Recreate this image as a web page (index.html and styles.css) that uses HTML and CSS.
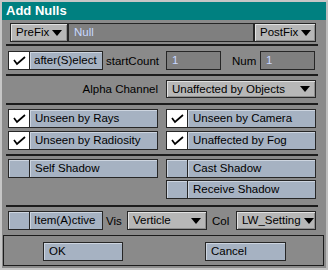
FILE: index.html
```html
<!DOCTYPE html>
<html>
<head>
<meta charset=utf-8>
<title>Add Nulls</title>
<link rel="stylesheet" href="styles.css">
</head>
<body>
<div class="window">
  <div class="titlebar">Add Nulls</div>
  <div class="content">
    <div class="row row-name">
      <div class="btn drop prefix">PreFix<span class="tri"></span></div>
      <div class="field name">Null</div>
      <div class="btn drop postfix">PostFix<span class="tri"></span></div>
    </div>
    <div class="sep"></div>
    <div class="row row-count">
      <div class="chk on"><svg width="20" height="17" viewBox="0 0 20 17"><polyline points="5,8 8,12 16,5" /></svg></div>
      <div class="lab short">after(S)elect</div>
      <div class="text count-label">startCount</div>
      <div class="field num">1</div>
      <div class="text num-label">Num</div>
      <div class="field num">1</div>
    </div>
    <div class="sep"></div>
    <div class="row row-alpha">
      <div class="text alpha-label">Alpha Channel</div>
      <div class="btn drop alpha">Unaffected by Objects<span class="tri"></span></div>
    </div>
    <div class="sep"></div>
    <div class="grid grid-flags">
      <div class="opt"><div class="chk on"><svg width="20" height="17" viewBox="0 0 20 17"><polyline points="5,8 8,12 16,5" /></svg></div><div class="lab">Unseen by Rays</div></div>
      <div class="opt"><div class="chk on"><svg width="20" height="17" viewBox="0 0 20 17"><polyline points="5,8 8,12 16,5" /></svg></div><div class="lab">Unseen by Camera</div></div>
      <div class="opt"><div class="chk on"><svg width="20" height="17" viewBox="0 0 20 17"><polyline points="5,8 8,12 16,5" /></svg></div><div class="lab">Unseen by Radiosity</div></div>
      <div class="opt"><div class="chk on"><svg width="20" height="17" viewBox="0 0 20 17"><polyline points="5,8 8,12 16,5" /></svg></div><div class="lab">Unaffected by Fog</div></div>
    </div>
    <div class="sep"></div>
    <div class="grid grid-shadow">
      <div class="opt"><div class="chk"></div><div class="lab">Self Shadow</div></div>
      <div class="opt"><div class="chk"></div><div class="lab">Cast Shadow</div></div>
      <div></div>
      <div class="opt"><div class="chk"></div><div class="lab">Receive Shadow</div></div>
    </div>
    <div class="sep sep-last"></div>
    <div class="row row-item">
      <div class="chk"></div>
      <div class="lab short">Item(A)ctive</div>
      <div class="text vis-label">Vis</div>
      <div class="btn drop pick">Verticle<span class="tri"></span></div>
      <div class="text col-label">Col</div>
      <div class="btn drop pick">LW_Setting<span class="tri"></span></div>
    </div>
  </div>
  <div class="footer">
    <div class="lab action ok">OK</div>
    <div class="lab action cancel">Cancel</div>
  </div>
</div>
</body>
</html>
```

FILE: styles.css
```css
* {
    box-sizing: border-box;
}
html, body {
    margin: 0;
    background: #c6c6c6;
}
body {
    font-family: "Liberation Sans", Arial, sans-serif;
    font-size: 11.5px;
    color: #000;
}
.window {
    width: 328px;
    height: 270px;
    border: 2px solid #c6c6c6;
    border-right-color: #bdbdbd;
    background: #8a8a8a;
    display: flex;
    flex-direction: column;
}
.titlebar {
    height: 18px;
    line-height: 18px;
    padding-left: 4px;
    background: #008080;
    color: #fff;
    font-weight: bold;
    font-size: 13px;
}
.content {
    padding: 0 8px 0 4px;
}
.row {
    display: flex;
    align-items: center;
    height: 19px;
    padding: 0 2px;
}
.sep {
    height: 2px;
    background: #1c1c1c;
}
/* widgets */
.btn, .lab, .field, .chk {
    height: 19px;
    line-height: 17px;
    border: 1px solid #262626;
    white-space: nowrap;
}
.btn {
    background: #b7b7b7;
    box-shadow: inset 1px 1px #e2e2e2, inset -1px -1px #8e8e8e;
    padding-left: 5px;
}
.lab {
    background: #a6b2c2;
    box-shadow: inset 1px 1px #cdd5e0;
    padding-left: 4px;
}
.field {
    background: #7f7f7f;
    color: #c8d8ff;
    padding-left: 5px;
}
.chk {
    width: 22px;
    flex: none;
    background: #a6b2c2;
    box-shadow: inset 1px 1px #cdd5e0;
}
.chk.on {
    background: #fff;
    box-shadow: none;
}
.chk svg {
    display: block;
}
.chk polyline {
    fill: none;
    stroke: #000;
    stroke-width: 1.7;
}
.chk + .lab {
    border-left: none;
}
.drop {
    display: flex;
    align-items: center;
    justify-content: space-between;
    padding-right: 5px;
}
.tri {
    width: 0;
    height: 0;
    border-left: 5px solid transparent;
    border-right: 5px solid transparent;
    border-top: 6px solid #000;
    margin-left: 3px;
}
.text {
    white-space: nowrap;
}
/* row 1 */
.row-name {
    margin-top: 3px;
    padding-left: 4px;
}
.prefix {
    width: 58px;
}
.postfix {
    width: 62px;
}
.name {
    flex: 1;
}
.row-name + .sep {
    margin-top: 2px;
}
/* row 2 */
.row-count {
    margin-top: 5px;
}
.short {
    width: 73px;
}
.count-label {
    width: 58px;
    padding-left: 3px;
}
.field.num {
    width: 55px;
    margin-left: 5px;
}
.num-label {
    width: 28px;
    margin-left: 11px;
}
.num-label + .field.num {
    margin-left: 0;
}
.row-count + .sep {
    margin-top: 4px;
}
/* alpha */
.row-alpha {
    margin-top: 4px;
    height: 18px;
}
.row-alpha .btn {
    height: 18px;
    line-height: 16px;
}
.alpha-label {
    width: 150px;
    text-align: right;
}
.alpha {
    width: 150px;
    margin-left: 8px;
}
.row-alpha + .sep {
    margin-top: 5px;
}
/* option grids */
.grid {
    display: grid;
    grid-template-columns: 150px 150px;
    column-gap: 8px;
    padding: 0 2px;
}
.opt {
    display: flex;
}
.opt .lab {
    flex: 1;
    padding-left: 5px;
}
.grid-flags {
    margin-top: 4px;
    row-gap: 3px;
}
.grid-flags + .sep {
    margin-top: 4px;
}
.grid-shadow {
    margin-top: 3px;
    row-gap: 2px;
}
.sep-last {
    margin-top: 6px;
}
/* item row */
.row-item {
    margin-top: 4px;
}
.vis-label {
    width: 24px;
    padding-left: 3px;
}
.pick {
    width: 80px;
}
.col-label {
    width: 29px;
    padding-left: 5px;
}
/* footer */
.footer {
    margin: 5px 2px 0 1px;
    height: 31px;
    border: 1px solid #1c1c1c;
    display: flex;
    padding: 6px 0 0 39px;
}
.action {
    padding-left: 5px;
}
.ok {
    width: 80px;
}
.cancel {
    width: 81px;
    margin-left: 82px;
}
```
